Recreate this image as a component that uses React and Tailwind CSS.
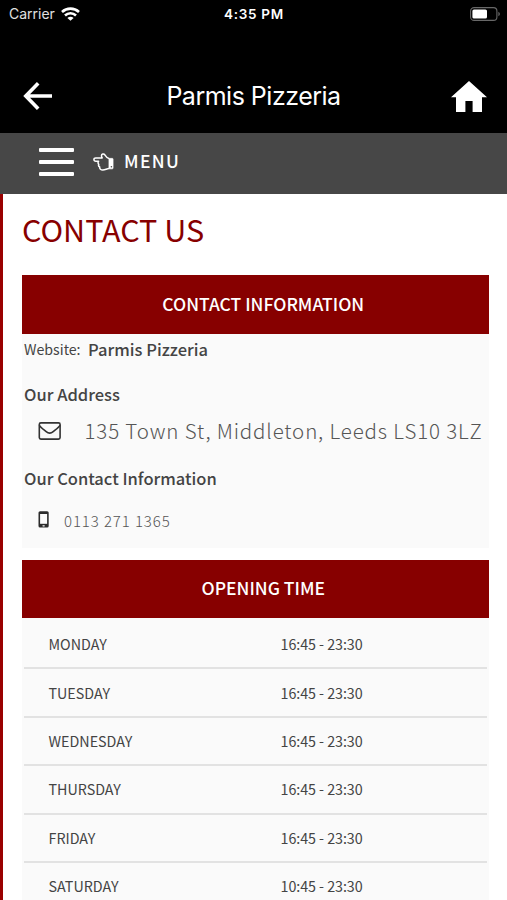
const OPENING_HOURS = [
    { day: "MONDAY", time: "16:45 - 23:30" },
    { day: "TUESDAY", time: "16:45 - 23:30" },
    { day: "WEDNESDAY", time: "16:45 - 23:30" },
    { day: "THURSDAY", time: "16:45 - 23:30" },
    { day: "FRIDAY", time: "16:45 - 23:30" },
    { day: "SATURDAY", time: "10:45 - 23:30" }
];

const WifiIcon = () => (
    <svg width="19" height="14" viewBox="0 0 19 14" fill="none" stroke="#fff" strokeWidth="2.6">
        <path d="M1 5C5.8 .5 13.2 .5 18 5" />
        <path d="M4 8.5C7.1 5.5 11.9 5.5 15 8.5" />
        <path d="M9.5 13.8L6.4 10.9C8.1 9.3 10.9 9.3 12.6 10.9Z" fill="#fff" stroke="none" />
    </svg>
);

const BatteryIcon = () => (
    <svg width="31" height="14" viewBox="0 0 31 14">
        <rect x=".6" y=".6" width="26.3" height="12.8" rx="3.5" fill="none" stroke="#686868" strokeWidth="1.1" />
        <rect x="2.4" y="2.4" width="14.6" height="9.2" rx="1.6" fill="#fff" />
        <path d="M28.4 4.8C30.4 5.6 30.4 8.4 28.4 9.2Z" fill="#686868" />
    </svg>
);

const BackIcon = () => (
    <svg width="30" height="28" viewBox="0 0 30 28" fill="none" stroke="#fff" strokeWidth="3.6">
        <path d="M16.2 1.3L3.8 14L16.2 26.7M3.8 14H30" />
    </svg>
);

const HomeIcon = () => (
    <svg width="36" height="31" viewBox="0 0 36 31" fill="#fff">
        <path d="M18 0L36 16.2H31V31H21.6V20H14.4V31H5V16.2H0Z" />
    </svg>
);

const HandIcon = () => (
    <svg width="21" height="18" viewBox="0 0 21 18" fill="none" stroke="#fff" strokeWidth="1.5" strokeLinejoin="round">
        <path d="M16 5.6C14.2 5.2 13 3.6 11.8 1.8C10.8 .4 8.4 .9 8.5 2.9C8.5 3.7 8.9 4.4 9.2 4.9H2.8C.3 4.9 .3 8.2 2.8 8.2H5.6C4.8 9.2 4.9 10.6 5.8 11.3C5.3 12.4 5.7 13.5 6.7 14C6.5 16 7.8 17 9.8 17C12.4 17 13.8 15.6 16 15.6" />
        <path d="M16 5.4H19.3Q20 5.4 20 6.1V15.1Q20 15.8 19.3 15.8H16Z" fill="#fff" strokeWidth=".8" />
        <circle cx="18.4" cy="13.8" r=".8" fill="#474747" stroke="none" />
    </svg>
);

const EnvelopeIcon = () => (
    <svg width="23" height="18" viewBox="0 0 23 18" fill="none" stroke="#333" strokeWidth="1.6" strokeLinejoin="round">
        <rect x="1.3" y=".9" width="20.8" height="16.2" rx="1.6" />
        <path d="M1.4 3.2C2 5 4.9 7 8.2 9.6C10.8 11.9 12.6 11.9 15.2 9.6C18.5 7 21.4 5 22 3.2" />
    </svg>
);

const PhoneIcon = () => (
    <svg width="11" height="17" viewBox="0 0 11 17">
        <rect x=".5" y=".2" width="10.2" height="16.4" rx="1.6" fill="#2b2b2b" />
        <rect x="2.1" y="3" width="7" height="9.8" fill="#fafafa" />
        <rect x="4.4" y="14.3" width="2.4" height="1.1" rx=".55" fill="#fafafa" />
    </svg>
);

const SectionTitle = ({ children }) => (
    <h2 className="flex h-[58.5px] items-center justify-center bg-[#870000] pl-[16px] pb-[1px] text-[17.5px] font-medium text-white">
        {children}
    </h2>
);

const Header = () => (
    <header className="h-[133px] bg-black font-['Inter',sans-serif] text-white">
        <div className="grid h-[27px] grid-cols-3 items-center pl-[9px] pr-[6px] text-[14px]">
            <div className="flex items-center gap-[6px]">
                <span className="text-[#e0e0e0]">Carrier</span>
                <WifiIcon />
            </div>
            <span className="pr-[2px] pt-[1px] text-center text-[13.5px] font-semibold tracking-[0.7px] whitespace-nowrap">4:35 PM</span>
            <div className="flex justify-end">
                <BatteryIcon />
            </div>
        </div>
        <div className="flex h-[106px] items-center justify-between pl-[22px] pr-[20px] pt-[32px]">
            <BackIcon />
            <h1 className="pl-[4px] pt-[2px] text-[25px] tracking-[-0.5px]">Parmis Pizzeria</h1>
            <HomeIcon />
        </div>
    </header>
);

const MenuBar = () => (
    <nav className="flex h-[60.5px] items-center bg-[#474747] pb-[3px] pl-[39px] text-white">
        <div className="flex flex-col gap-[8px]">
            <span className="h-[4px] w-[35px] rounded-[1px] bg-white" />
            <span className="h-[4px] w-[35px] rounded-[1px] bg-white" />
            <span className="h-[4px] w-[35px] rounded-[1px] bg-white" />
        </div>
        <div className="ml-[19px]">
            <HandIcon />
        </div>
        <span className="ml-[10px] pb-[2px] text-[17.5px] font-medium tracking-[1.4px]">MENU</span>
    </nav>
);

const ContactInfo = () => (
    <div className="h-[214.5px] bg-[#fafafa] pl-[2px] text-[#444]">
        <div className="flex h-[31px] items-center gap-[7.5px]">
            <span className="pt-[1px] text-[14.2px]">Website:</span>
            <span className="text-[16.5px] font-medium">Parmis Pizzeria</span>
        </div>
        <h3 className="mt-[17px] h-[24px] text-[16.5px] leading-[24px] font-medium">Our Address</h3>
        <div className="flex h-[50px] items-center pl-[14px]">
            <EnvelopeIcon />
            <span className="ml-[23.5px] whitespace-nowrap text-[20.5px] font-light tracking-[0.85px] text-[#555]">
                135 Town St, Middleton, Leeds LS10 3LZ
            </span>
        </div>
        <h3 className="mt-[10px] h-[24px] text-[16.5px] leading-[24px] font-medium">Our Contact Information</h3>
        <div className="mt-[15px] flex h-[30px] items-center pl-[14px]">
            <PhoneIcon />
            <span className="ml-[15px] pt-[3px] text-[15px] font-light tracking-[0.9px] text-[#555]">0113 271 1365</span>
        </div>
    </div>
);

const OpeningTable = () => (
    <div className="bg-[#fafafa] px-[2px] pt-[3px] text-[14.3px] text-[#444]">
        {OPENING_HOURS.map(({ day, time }) => (
            <div key={day} className="flex h-[48.4px] items-center border-b-2 border-[#e2e2e2] pb-[0.5px] pl-[24.5px]">
                <span className="w-[232px]">{day}</span>
                <span className="tracking-[-0.05px]">{time}</span>
            </div>
        ))}
    </div>
);

export default function App() {
    return (
        <div className="h-[900px] w-[507px] overflow-hidden bg-white font-['Noto_Sans_CJK_SC',sans-serif]">
            <Header />
            <MenuBar />
            <main className="h-[707px] border-l-[3px] border-[#990000] pl-[19px] pr-[18.5px]">
                <h1 className="h-[81.5px] pt-[15px] text-[30.5px] leading-[40px] text-[#870000]">CONTACT US</h1>
                <SectionTitle>CONTACT INFORMATION</SectionTitle>
                <ContactInfo />
                <div className="h-[11.5px]" />
                <SectionTitle>OPENING TIME</SectionTitle>
                <OpeningTable />
            </main>
        </div>
    );
}
